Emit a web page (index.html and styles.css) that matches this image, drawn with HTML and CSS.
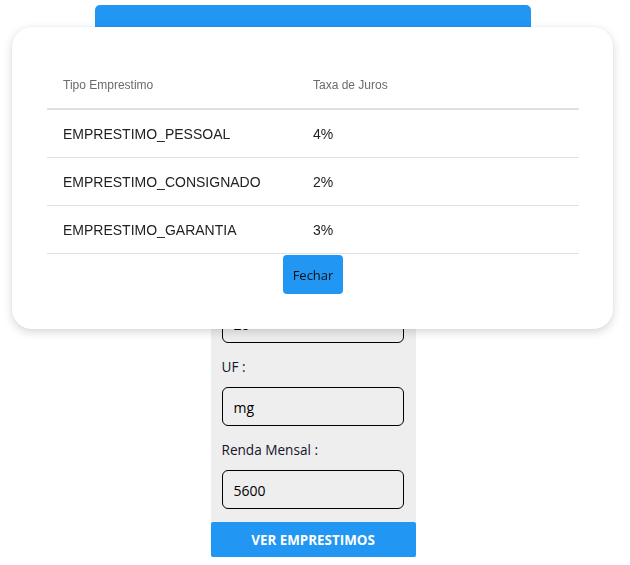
FILE: index.html
```html
<!DOCTYPE html>
<html lang="pt">
<head>
<meta charset="utf-8">
<title>Simulador de Empréstimos</title>
<link rel="stylesheet" href="styles.css">
</head>
<body>
<div class="page">
  <div class="topbar">Simulador de Empréstimos</div>
  <form class="panel">
    <div class="field"><label class="label">Nome :</label><input class="input" value="Maria"></div>
    <div class="field"><label class="label">CPF :</label><input class="input" value="12345678900"></div>
    <div class="field"><label class="label">Idade :</label><input class="input" value="20"></div>
    <div class="field"><label class="label">UF :</label><input class="input" value="mg"></div>
    <div class="field"><label class="label">Renda Mensal :</label><input class="input" value="5600"></div>
    <button type="button" class="submit">VER EMPRESTIMOS</button>
  </form>
</div>

<div class="overlay">
  <div class="modal">
    <table class="table">
      <thead>
        <tr><th class="col1">Tipo Emprestimo</th><th>Taxa de Juros</th></tr>
      </thead>
      <tbody>
        <tr><td class="col1">EMPRESTIMO_PESSOAL</td><td>4%</td></tr>
        <tr><td class="col1">EMPRESTIMO_CONSIGNADO</td><td>2%</td></tr>
        <tr><td class="col1">EMPRESTIMO_GARANTIA</td><td>3%</td></tr>
      </tbody>
    </table>
    <div class="actions"><button type="button" class="close">Fechar</button></div>
  </div>
</div>
</body>
</html>
```
FILE: styles.css
```css
html, body {
  margin: 0;
  padding: 0;
  background: #fff;
  font-family: "Open Sans", "Noto Sans", sans-serif;
}

.page {
  display: flex;
  flex-direction: column;
  align-items: center;
  padding: 5px 4px 0 0;
}

.topbar {
  width: 436px;
  height: 78px;
  background: #2196f3;
  border-radius: 5px 5px 0 0;
  color: #fff;
  font-size: 20px;
  display: flex;
  align-items: center;
  justify-content: center;
}

.panel {
  width: 205px;
  background: #eeeeee;
  padding-top: 11px;
  display: flex;
  flex-direction: column;
  margin: 0;
}

.field {
  display: flex;
  flex-direction: column;
  padding: 0 12px 0 11px;
}

.label {
  margin: 13px 0 10px;
  line-height: 21px;
  font-size: 13.6px;
  color: #14142a;
}

.input {
  box-sizing: border-box;
  height: 39px;
  width: 100%;
  border: 1px solid #000;
  border-radius: 6px;
  background: #eeeeee;
  padding: 2px 11px 0;
  font-family: "Open Sans", "Noto Sans", sans-serif;
  font-size: 14px;
  color: #000;
}

.submit {
  margin-top: 13px;
  height: 35px;
  border: none;
  border-radius: 2px;
  background: #2196f3;
  color: #fff;
  font-family: "Open Sans", "Noto Sans", sans-serif;
  font-weight: 700;
  font-size: 13.4px;
  padding: 0;
}

.overlay {
  position: fixed;
  top: 0;
  left: 0;
  right: 0;
  bottom: 0;
}

.modal {
  position: absolute;
  left: 12px;
  top: 27px;
  width: 601px;
  box-sizing: border-box;
  padding: 35px 34px 35px 35px;
  background: #fff;
  border-radius: 20px;
  box-shadow: 0 3px 10px rgba(0, 0, 0, 0.16), 0 0 3px rgba(0, 0, 0, 0.05);
}

.table {
  width: 100%;
  border-collapse: collapse;
  font-family: "Liberation Sans", Arial, sans-serif;
}

.table th {
  text-align: left;
  font-weight: 400;
  font-size: 12px;
  color: #6b6b6b;
  height: 46px;
  padding: 0 16px;
  border-bottom: 2px solid #e0e0e0;
}

.table td {
  font-size: 14px;
  color: #222;
  height: 47px;
  padding: 0 16px;
  border-bottom: 1px solid #e0e0e0;
}

.table .col1 {
  width: 234px;
}

.table th:not(.col1), .table td:not(.col1) {
  padding-left: 0;
}

.actions {
  display: flex;
  justify-content: center;
}

.close {
  margin-top: 1px;
  height: 39px;
  width: 60px;
  border: none;
  border-radius: 4px;
  background: #2196f3;
  color: #111;
  font-family: "Open Sans", "Noto Sans", sans-serif;
  font-size: 13px;
  padding: 0;
}
```
